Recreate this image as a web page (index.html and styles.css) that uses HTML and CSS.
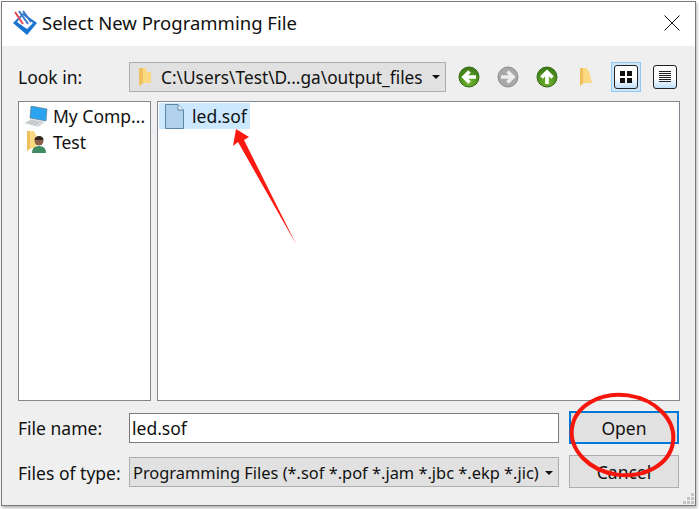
FILE: index.html
```html
<!DOCTYPE html>
<html lang="en">
<head>
    <meta charset="UTF-8">
    <meta name="viewport" content="width=device-width, initial-scale=1.0">
    <title>Select New Programming File</title>
    <link rel="stylesheet" href="styles.css">
</head>
<body>
    <div class="dialog">
        <div class="titlebar">
            <svg class="app-icon" width="26" height="26" viewBox="0 0 26 26">
                <path d="M1 13 L11 3 L25 13 L15 25 Z" fill="#1a75d2"/>
                <path d="M5 12 L11 5 L21 13 L15 19 Z" fill="#fff"/>
                <path d="M3 2 L11 14" stroke="#e8494f" stroke-width="2"/>
                <path d="M7 1 L16 14 M11 1 L19 12" stroke="#3b78c8" stroke-width="2"/>
            </svg>
            <span class="title">Select New Programming File</span>
            <svg class="close" width="16" height="16" viewBox="0 0 16 16">
                <path d="M0.5 0.5 L15.5 15.5 M15.5 0.5 L0.5 15.5" stroke="#111" stroke-width="1" fill="none"/>
            </svg>
        </div>

        <div class="content">
            <div class="look-row">
                <span class="label">Look in:</span>
                <div class="combo path-combo">
                    <svg class="folder" width="14" height="20" viewBox="0 0 14 20">
                        <path d="M1 1 H8 L9 5 H13 V16 H5 L1 19 Z" fill="#fbd981"/>
                        <path d="M1 1 H5 V16 L1 19 Z" fill="#eebf5c"/>
                    </svg>
                    <span class="combo-text">C:\Users\Test\D...ga\output_files</span>
                    <span class="caret"></span>
                </div>
                <div class="tools">
                    <svg class="tool-round" width="22" height="22" viewBox="0 0 22 22">
                        <circle cx="11" cy="11" r="10" fill="url(#green)" stroke="#2f6b12" stroke-width="1"/>
                        <path d="M18 11 H7 M11.5 5.5 L6 11 L11.5 16.5" stroke="#fff" stroke-width="3.6" fill="none"/>
                        <defs>
                            <radialGradient id="green" cx="50%" cy="75%" r="70%">
                                <stop offset="0" stop-color="#74b82f"/>
                                <stop offset="1" stop-color="#3d7a18"/>
                            </radialGradient>
                        </defs>
                    </svg>
                    <svg class="tool-round" width="22" height="22" viewBox="0 0 22 22">
                        <circle cx="11" cy="11" r="10" fill="#a8a8a8" stroke="#8c8c8c" stroke-width="1"/>
                        <path d="M4 11 H15 M10.5 5.5 L16 11 L10.5 16.5" stroke="#eee" stroke-width="3.6" fill="none"/>
                    </svg>
                    <svg class="tool-round" width="22" height="22" viewBox="0 0 22 22">
                        <circle cx="11" cy="11" r="10" fill="url(#green)" stroke="#2f6b12" stroke-width="1"/>
                        <path d="M11 18 V7 M5.5 11.5 L11 6 L16.5 11.5" stroke="#fff" stroke-width="3.6" fill="none"/>
                    </svg>
                    <svg class="tool-folder" width="14" height="20" viewBox="0 0 14 20">
                        <path d="M1 1 H8 L9 4 H10 L13 16 H5 L1 19 Z" fill="#fbd981"/>
                        <path d="M1 1 H4 V16 L1 19 Z" fill="#eebf5c"/>
                    </svg>
                    <div class="view-btn active">
                        <span class="view-inner">
                            <svg width="14" height="14" viewBox="0 0 14 14">
                                <path d="M1 1 H6 V6 H1 Z M8 1 H13 V6 H8 Z M1 8 H6 V13 H1 Z M8 8 H13 V13 H8 Z" fill="#111"/>
                            </svg>
                        </span>
                    </div>
                    <div class="view-btn">
                        <span class="view-inner">
                            <svg width="14" height="12" viewBox="0 0 14 12">
                                <path d="M1 .5 H13 M1 2.5 H13 M1 4.5 H13 M1 6.5 H13 M1 8.5 H13 M1 10.5 H13" stroke="#222" stroke-width="1"/>
                            </svg>
                        </span>
                    </div>
                </div>
            </div>

            <div class="panels">
                <div class="panel sidebar">
                    <div class="side-item">
                        <svg width="24" height="21" viewBox="0 0 24 21">
                            <path d="M7 0 L23 3 L22 15 L6 12 Z" fill="#2ba3ee" stroke="#5a7080" stroke-width=".6"/>
                            <path d="M0 17 L8 13 L21 16 L14 21 Z" fill="#d5d8da"/>
                            <path d="M3 17 L9 14 M6 18 L12 15 M9 19 L15 16" stroke="#aab0b4" stroke-width=".8"/>
                        </svg>
                        <span>My Comp...</span>
                    </div>
                    <div class="side-item">
                        <svg width="24" height="22" viewBox="0 0 24 22">
                            <path d="M3 0 H10 L12 4 V17 H8 L3 20 Z" fill="#fbd981"/>
                            <path d="M3 0 H6 V17 L3 20 Z" fill="#eebf5c"/>
                            <path d="M8 22 Q8 15 15 15 Q22 15 22 22 Z" fill="#3f8a62"/>
                            <circle cx="15" cy="10" r="4.5" fill="#8a5f48"/>
                            <path d="M10.5 9 Q11 5 15 5 Q19 5 19.5 9 Z" fill="#33251f"/>
                        </svg>
                        <span>Test</span>
                    </div>
                </div>
                <div class="panel files">
                    <div class="file-item">
                        <svg width="19" height="25" viewBox="0 0 19 25">
                            <path d="M.5 .5 H13 L18.5 6 V24.5 H.5 Z" fill="#b0d0ec" stroke="#5b86a6" stroke-width="1"/>
                            <path d="M13 .5 V6 H18.5" fill="#e8f1f8" stroke="#5b86a6" stroke-width="1"/>
                        </svg>
                        <span>led.sof</span>
                    </div>
                </div>
            </div>

            <div class="form-row name-row">
                <span class="label">File name:</span>
                <div class="name-input">led.sof</div>
                <button class="btn btn-open">Open</button>
            </div>
            <div class="form-row type-row">
                <span class="label">Files of type:</span>
                <div class="combo type-combo">
                    <span class="combo-text">Programming Files (*.sof *.pof *.jam *.jbc *.ekp *.jic)</span>
                    <span class="caret"></span>
                </div>
                <button class="btn">Cancel</button>
            </div>
        </div>
        <svg class="grip" width="11" height="11" viewBox="0 0 11 11">
            <path d="M8 0 H11 V3 H8 Z M4 4 H7 V7 H4 Z M8 4 H11 V7 H8 Z M0 8 H3 V11 H0 Z M4 8 H7 V11 H4 Z M8 8 H11 V11 H8 Z" fill="#c4c4c4"/>
        </svg>
    </div>

    <!-- red markup drawn over the screenshot -->
    <svg class="markup" width="699" height="509" viewBox="0 0 699 509">
        <path d="M236 129 L249 137 L244 140 L296 244 L238 142 L233 146 Z" fill="#fb1a10"/>
        <ellipse cx="622.5" cy="435" rx="51" ry="40" fill="none" stroke="#f5160c" stroke-width="4" transform="rotate(8 622.5 435)"/>
    </svg>
</body>
</html>
```

FILE: styles.css
```css
* {
    box-sizing: border-box;
}

body {
    margin: 0;
    width: 699px;
    height: 509px;
    overflow: hidden;
    background: #fff;
    font-family: "Noto Sans", sans-serif;
    font-size: 17.5px;
    color: #111;
    position: relative;
}

.dialog {
    position: relative;
    width: 695px;
    height: 505px;
    margin: 1px 0 0 1px;
    border: 1px solid #7a7a7a;
    background: #efefef;
    box-shadow: 1px 2px 3px rgba(0, 0, 0, 0.3);
}

.titlebar {
    height: 44px;
    background: #fff;
    display: flex;
    align-items: center;
    padding: 0 15px 3px 10px;
}

.app-icon {
    flex: none;
}

.title {
    margin-left: 4px;
    font-size: 18.5px;
    flex: 1;
}

.content {
    padding: 16px 15px 0 16px;
}

.look-row {
    display: flex;
    align-items: center;
    height: 30px;
}

.label {
    width: 111px;
    flex: none;
}

.combo {
    display: flex;
    align-items: center;
    flex: none;
    background: #e1e1e1;
    border: 1px solid #adadad;
    height: 30px;
}

.path-combo {
    width: 317px;
    padding: 0 5px 0 8px;
    font-size: 17.3px;
}

.folder {
    margin-right: 9px;
    flex: none;
}

.combo-text {
    flex: 1;
    white-space: nowrap;
}

.caret {
    flex: none;
    border-left: 4px solid transparent;
    border-right: 4px solid transparent;
    border-top: 4px solid #111;
}

.tools {
    display: flex;
    align-items: center;
    margin-left: 12px;
}

.tool-round {
    flex: none;
    margin-right: 17px;
}

.tool-round:nth-child(3) {
    margin-right: 21px;
}

.tool-folder {
    flex: none;
    margin-right: 18px;
}

.view-btn {
    width: 30px;
    height: 30px;
    flex: none;
    display: flex;
    align-items: center;
    justify-content: center;
    border: 1px solid transparent;
}

.view-btn + .view-btn {
    margin-left: 9px;
}

.view-btn.active {
    background: #cde6fb;
    border-color: #90c8f6;
}

.view-inner {
    width: 24px;
    height: 24px;
    border: 1.5px solid #222;
    border-radius: 3px;
    background: linear-gradient(#fff 55%, #bfdff8);
    display: flex;
    align-items: center;
    justify-content: center;
}

.panels {
    display: flex;
    gap: 6px;
    margin-top: 9px;
    height: 300px;
}

.panel {
    background: #fff;
    border: 1px solid #828790;
}

.sidebar {
    width: 133px;
    flex: none;
    padding-top: 1px;
}

.side-item {
    display: flex;
    align-items: center;
    height: 26px;
    padding-left: 5px;
    gap: 5px;
    white-space: nowrap;
}

.files {
    flex: 1;
    padding: 1px;
}

.file-item {
    display: inline-flex;
    align-items: center;
    gap: 8px;
    height: 26px;
    width: 91px;
    padding-left: 6px;
    background: #cce8ff;
}

.form-row {
    display: flex;
    align-items: center;
}

.name-row {
    margin-top: 10px;
    height: 33px;
}

.type-row {
    margin-top: 11px;
    height: 33px;
}

.type-row .label {
    padding-top: 2px;
}

.name-input {
    width: 430px;
    height: 30px;
    background: #fff;
    border: 1px solid #7a7a7a;
    padding-left: 2px;
    line-height: 28px;
}

.type-combo {
    width: 430px;
    padding: 2px 5px 0 3px;
    font-size: 16.4px;
}

.btn {
    width: 110px;
    height: 33px;
    margin-left: 10px;
    background: #e1e1e1;
    border: 1px solid #adadad;
    font: inherit;
    color: #111;
    padding: 0;
}

.btn-open {
    border: 2px solid #0078d7;
}

.grip {
    position: absolute;
    right: 1px;
    bottom: 1px;
}

.markup {
    position: absolute;
    left: 0;
    top: 0;
}
```
